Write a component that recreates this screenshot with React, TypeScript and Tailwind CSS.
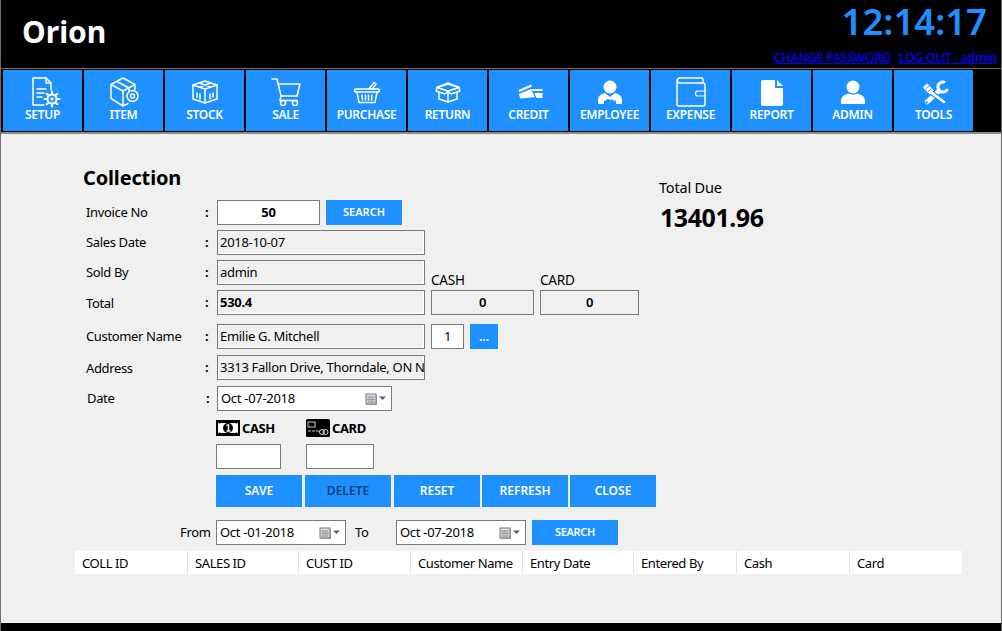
import React from 'react';

const FONT = "font-['Noto_Sans','Open_Sans',sans-serif]";

// All toolbar icons share a 40x34 box centred on the button
const Svg = ({ children }: { children: React.ReactNode }) => (
  <svg width="40" height="34" viewBox="0 0 40 34" fill="none" stroke="#fff" strokeWidth="1.5" strokeLinejoin="round" strokeLinecap="round">
    {children}
  </svg>
);

const SetupIcon = () => (
  <Svg>
    <path d="M21 29H10V2h13l5 5v7" />
    <path d="M23 2v5h5" />
    <path d="M14 13h9M14 17h7M14 21h5" />
    <circle cx="29" cy="23" r="4.5" strokeWidth="2" />
    <circle cx="29" cy="23" r="1.5" fill="#fff" stroke="none" />
    <path d="M29 15.5v2.5M29 28v2.5M21.5 23H24M34 23h2.500M23.7 17.700l1.800 1.800M32.500 26.500l1.800 1.800M34.300 17.700l-1.800 1.800M25.500 26.500l-1.800 1.800" strokeWidth="2" />
  </Svg>
);

const ItemIcon = () => (
  <Svg>
    <path d="M19 2L7 8.500v14L19 30l5-2.500M19 2l12 6.500v5M7 8.500L19 15l12-6.500M19 15v15" />
    <path d="M13 5.500l12 6.500v3.500" />
    <circle cx="28.500" cy="20" r="5.500" />
    <circle cx="28.500" cy="20" r="2" />
  </Svg>
);

const StockIcon = () => (
  <Svg>
    <path d="M20 5l12 4v14l-12 4-12-4V9z" />
    <path d="M8 9l12 4 12-4M20 13v14" />
    <path d="M14 7l12 4M26 7L14 11M12 17v4M15 18v5M25 18v5M28 17v4" />
  </Svg>
);

const SaleIcon = () => (
  <Svg>
    <path d="M6 3h5l4 17h16" />
    <path d="M12 8h22l-3 12" />
    <circle cx="17" cy="27" r="2.500" />
    <circle cx="29" cy="27" r="2.500" />
    <path d="M15 20l-1 4.500h17" />
  </Svg>
);

const PurchaseIcon = () => (
  <Svg>
    <path d="M9 13h22a1.500 1.500 0 010 3H9a1.500 1.500 0 010-3z" />
    <path d="M10 16l2 10.500h16l2-10.500" />
    <path d="M15 19l.5 5M18.500 19v5M21.500 19v5M25 19l-.5 5" />
    <path d="M22 13l5-6.500 2 1.500-3.500 5" />
  </Svg>
);

const ReturnIcon = () => (
  <Svg>
    <path d="M20 8l11 3.500L20 15 9 11.500z" />
    <path d="M9 11.500L20 7l11 4.500M9 12l-1 3 9 3 3-3 3 3 9-3-1-3" />
    <path d="M11 17v6l9 3 9-3v-6M20 15v11" />
  </Svg>
);

const CreditIcon = () => (
  <svg width="40" height="34" viewBox="0 0 40 34" fill="#fff">
    <path d="M9.500 14L22 8.500l1 2-12.500 5.500z" />
    <path d="M10 18l12-5 4 8-14 1.500-1-.5z" />
    <path d="M22.500 13h11v2h-10zM25.500 17h8v5h-6z" />
  </svg>
);

const EmployeeIcon = () => (
  <Svg>
    <circle cx="20" cy="11" r="6.500" fill="#fff" stroke="none" />
    <path d="M8 28v-4c0-4 3-6 7-7l5 4 5-4c4 1 7 3 7 7v4h-6v-3l-3-2-2 1-3-1-4 2v3z" fill="#fff" stroke="none" />
    <path d="M16 20l4 3 3-1 1 3" strokeWidth="1" />
  </Svg>
);

const ExpenseIcon = () => (
  <Svg>
    <path d="M32 7V4a2 2 0 00-2-2H9a3 3 0 00-3 3v23a2 2 0 002 2h24a2 2 0 002-2V9a2 2 0 00-2-2H9a3 3 0 01-3-3" />
    <path d="M34 15h-7a2.500 2.500 0 000 5h7" strokeWidth="1.200" />
  </Svg>
);

const ReportIcon = () => (
  <svg width="40" height="34" viewBox="0 0 40 34" fill="#fff">
    <path d="M11 4h12v8h8v16a2 2 0 01-2 2H11a2 2 0 01-2-2V6a2 2 0 012-2z" />
    <path d="M25 4l6 6h-6z" />
  </svg>
);

const AdminIcon = () => (
  <svg width="40" height="34" viewBox="0 0 40 34" fill="#fff">
    <circle cx="20" cy="11" r="6.500" />
    <path d="M8 28v-3c0-5 5-7 8-7.500 2 1.500 6 1.500 8 0 3 .5 8 2.500 8 7.500v3z" />
  </svg>
);

const ToolsIcon = () => (
  <svg width="40" height="34" viewBox="0 0 40 34" fill="none" stroke="#fff" strokeLinecap="round">
    {/* wrench */}
    <path d="M31 6.500A5 5 0 1 0 33.500 13" strokeWidth="3" strokeLinecap="butt" />
    <path d="M25 15L13 26" strokeWidth="4.500" />
    <circle cx="12.500" cy="26.500" r="1.200" fill="#1e90ff" stroke="none" />
    {/* screwdriver on top of the wrench, with a blue gap */}
    <path d="M18 17l12 9" stroke="#1e90ff" strokeWidth="5" strokeLinecap="butt" />
    <path d="M11 9.500l7 7" strokeWidth="6" strokeLinecap="butt" />
    <path d="M11.500 13.500l3.500-3.500M14 16l3.500-3.500" stroke="#1e90ff" strokeWidth="0.900" strokeLinecap="butt" />
    <path d="M18 17l12 9" strokeWidth="2.500" />
  </svg>
);

const NAV_ITEMS = [
  { label: 'SETUP', icon: <SetupIcon /> },
  { label: 'ITEM', icon: <ItemIcon /> },
  { label: 'STOCK', icon: <StockIcon /> },
  { label: 'SALE', icon: <SaleIcon /> },
  { label: 'PURCHASE', icon: <PurchaseIcon /> },
  { label: 'RETURN', icon: <ReturnIcon /> },
  { label: 'CREDIT', icon: <CreditIcon /> },
  { label: 'EMPLOYEE', icon: <EmployeeIcon /> },
  { label: 'EXPENSE', icon: <ExpenseIcon /> },
  { label: 'REPORT', icon: <ReportIcon /> },
  { label: 'ADMIN', icon: <AdminIcon /> },
  { label: 'TOOLS', icon: <ToolsIcon /> },
];

const COLUMNS = [
  { label: 'COLL ID', w: 'w-[113px]' },
  { label: 'SALES ID', w: 'w-[111px]' },
  { label: 'CUST ID', w: 'w-[112px]' },
  { label: 'Customer Name', w: 'w-[112px]' },
  { label: 'Entry Date', w: 'w-[111px]' },
  { label: 'Entered By', w: 'w-[103px]' },
  { label: 'Cash', w: 'w-[113px]' },
  { label: 'Card', w: 'flex-1' },
];

const Row = ({ label, children, className = '', labelClass = '' }: { label: string; children: React.ReactNode; className?: string; labelClass?: string }) => (
  <div className={`flex h-[25px] items-center ${className}`}>
    <div className={`w-[122px] pl-[3px] text-[13px] tracking-[-0.35px] text-black ${labelClass}`}>{label}</div>
    <div className="w-[12px] text-[13px] font-bold text-black">:</div>
    {children}
  </div>
);

const Field = ({ children, className = '' }: { children: React.ReactNode; className?: string }) => (
  <div className={`flex h-[25px] items-center overflow-hidden whitespace-nowrap border border-[#7a7a7a] text-[13px] tracking-[-0.3px] text-black ${className}`}>
    {children}
  </div>
);

const ReadOnly = ({ children, className = '' }: { children: React.ReactNode; className?: string }) => (
  <Field className={`w-[208px] bg-[#f0f0f0] pl-[2px] shadow-[inset_-1px_-1px_0_#fff] ${className}`}>{children}</Field>
);

const CalendarCaret = () => (
  <svg width="22" height="14" viewBox="0 0 22 14" className="shrink-0">
    <rect x="2" y="3" width="10" height="10" fill="#a8a8a8" />
    <rect x="1" y="2" width="10" height="10" fill="#e0e0e0" stroke="#787878" />
    <path d="M2 5h8M2 7.500h8M2 10h8M4 4v7M6 4v7M8 4v7" stroke="#9090a0" strokeWidth="0.800" />
    <path d="M14 4.500h7l-3.500 3.500z" fill="#55607a" />
  </svg>
);

const DateField = ({ value, className }: { value: string; className: string }) => (
  <Field className={`justify-between bg-white pl-[3px] pr-[4px] ${className}`}>
    <span className="pt-[1px]">{value}</span>
    <CalendarCaret />
  </Field>
);

const ActionButton = ({ children, className = '' }: { children: React.ReactNode; className?: string }) => (
  <button className={`flex items-center justify-center bg-[#1e90ff] font-semibold ${className}`}>
    {children}
  </button>
);

const CashIcon = () => (
  <svg width="24" height="18" viewBox="0 0 24 18" className="shrink-0">
    <path d="M0 1h24v16H0z" fill="#000" />
    <path d="M5 4h14a3 3 0 003 0v10a3 3 0 00-3 0H5a3 3 0 00-3 0V4a3 3 0 003 0z" fill="#fff" />
    <circle cx="12" cy="9" r="5" fill="#000" />
    <path d="M10.500 6.500L12.500 6v6M10.500 12h4" stroke="#fff" strokeWidth="1.500" fill="none" />
  </svg>
);

const CardIcon = () => (
  <svg width="24" height="18" viewBox="0 0 24 18" className="shrink-0">
    <rect x="0" y="0" width="24" height="18" rx="1.500" fill="#000" />
    <rect x="2" y="3" width="7" height="5" fill="none" stroke="#ccc" />
    <path d="M2 12h3M6 12h3M10 12h3" stroke="#ccc" />
    <circle cx="16" cy="13" r="2.500" fill="none" stroke="#ddd" />
    <circle cx="19.500" cy="13" r="2.500" fill="none" stroke="#ddd" />
  </svg>
);

export default function App() {
  return (
    <div className={`flex h-[631px] w-[1002px] flex-col overflow-hidden border-x border-[#6e6e6e] bg-black ${FONT}`}>
      {/* Header */}
      <header className="flex h-[68px] justify-between bg-black pl-[21px] pr-[4px]">
        <div className="pt-[10px] text-[30px] font-bold leading-[44px] text-white">Orion</div>
        <div className="flex flex-col items-end">
          <div className="-mt-[4px] mr-[10px] text-[36.500px] font-semibold leading-[50px] text-[#1e90ff]">12:14:17</div>
          <div className="mt-[3px] flex gap-[8px] text-[12.500px] font-medium leading-[17px] tracking-[-0.33px] text-[#0000ff] underline">
            <span>CHANGE PASSWORD</span>
            <span>LOG OUT - admin</span>
          </div>
        </div>
      </header>
      <div className="h-[1px] bg-[#6e6e6e]" />

      {/* Toolbar */}
      <nav className="flex h-[63px] gap-[2px] bg-black pl-[2px] pt-[1px]">
        {NAV_ITEMS.map((item) => (
          <div key={item.label} className="flex h-[61px] w-[79px] flex-col items-center bg-[#1e90ff] pt-[6px]">
            {item.icon}
            <div className="-mt-[2px] text-[12px] font-semibold leading-[14px] tracking-[-0.3px] text-white">{item.label}</div>
          </div>
        ))}
      </nav>
      <div className="h-[2px] bg-[#8a8a8a]" />

      {/* Content */}
      <main className="flex-1 bg-[#f0f0f0] pl-[74px] pt-[29px]">
        <div className="flex">
          <div className="w-[584px] pl-[8px]">
            <h1 className="mb-[7px] h-[30px] text-[20px] font-bold leading-[30px] tracking-[-0.15px] text-black">Collection</h1>

            <Row label="Invoice No">
              <Field className="w-[103px] justify-center bg-white font-bold">50</Field>
              <ActionButton className="ml-[6px] h-[25px] w-[76px] text-[11px] text-white">SEARCH</ActionButton>
            </Row>
            <Row label="Sales Date" className="mt-[5px]">
              <ReadOnly>2018-10-07</ReadOnly>
            </Row>
            <Row label="Sold By" className="mt-[5px]">
              <ReadOnly>admin</ReadOnly>
              <div className="ml-[6px] flex h-full items-end text-[13.500px] leading-[10px] tracking-[-0.2px] text-black">
                <span className="w-[109px]">CASH</span>
                <span>CARD</span>
              </div>
            </Row>
            <Row label="Total" className="mt-[5px]" labelClass="pt-[2px]">
              <ReadOnly className="font-bold">530.4</ReadOnly>
              <Field className="ml-[6px] w-[103px] justify-center bg-[#f0f0f0] font-semibold">0</Field>
              <Field className="ml-[6px] w-[99px] justify-center bg-[#f0f0f0] font-semibold">0</Field>
            </Row>
            <Row label="Customer Name" className="mt-[9px]">
              <ReadOnly>Emilie G. Mitchell</ReadOnly>
              <Field className="ml-[6px] w-[33px] justify-center bg-white">1</Field>
              <ActionButton className="ml-[6px] h-[25px] w-[28px] text-[12px] text-white">...</ActionButton>
            </Row>
            <Row label="Address" className="mt-[6px]" labelClass="pt-[2px]">
              <ReadOnly>3313 Fallon Drive, Thorndale, ON N0M 2P0</ReadOnly>
            </Row>
            <Row label="Date" className="mt-[6px]" labelClass="ml-[1px]">
              <DateField value="Oct -07-2018" className="-ml-[1px] w-[175px]" />
            </Row>

            <div className="ml-[133px] mt-[7px] flex h-[18px]">
              <div className="flex w-[90px] items-center gap-[2px] pt-[1px] text-[13px] font-bold leading-[18px] tracking-[-0.4px] text-black">
                <CashIcon />
                CASH
              </div>
              <div className="flex items-center gap-[2px] pt-[1px] text-[13px] font-bold leading-[18px] tracking-[-0.4px] text-black">
                <CardIcon />
                CARD
              </div>
            </div>
            <div className="ml-[133px] mt-[8px] flex">
              <div className="h-[25px] w-[65px] border border-[#7a7a7a] bg-white" />
              <div className="ml-[25px] h-[25px] w-[68px] border border-[#7a7a7a] bg-white" />
            </div>
            <div className="ml-[133px] mt-[6px] flex">
              <ActionButton className="h-[32px] w-[86px] text-[12px] text-white">SAVE</ActionButton>
              <ActionButton className="ml-[3px] h-[32px] w-[86px] text-[12px] text-[#0f3f78]">DELETE</ActionButton>
              <ActionButton className="ml-[3px] h-[32px] w-[86px] text-[12px] text-white">RESET</ActionButton>
              <ActionButton className="ml-[2px] h-[32px] w-[86px] text-[12px] text-white">REFRESH</ActionButton>
              <ActionButton className="ml-[2px] h-[32px] w-[86px] text-[12px] text-white">CLOSE</ActionButton>
            </div>
          </div>

          {/* Total due */}
          <div className="pt-[14px]">
            <div className="text-[14.500px] leading-[20px] tracking-[-0.2px] text-black">Total Due</div>
            <div className="mt-[4px] pl-[1px] text-[25px] font-bold leading-[32px] tracking-[-0.45px] text-black">13401.96</div>
          </div>
        </div>

        {/* Date range filter */}
        <div className="ml-[105px] mt-[13px] flex h-[25px] items-center text-[13px] tracking-[-0.3px] text-black">
          <span className="w-[36px] pt-[1px]">From</span>
          <DateField value="Oct -01-2018" className="w-[130px]" />
          <span className="ml-[9px] w-[41px] pt-[1px]">To</span>
          <DateField value="Oct -07-2018" className="w-[130px]" />
          <ActionButton className="ml-[6px] h-[25px] w-[86px] text-[11px] text-white">SEARCH</ActionButton>
        </div>

        {/* Grid header */}
        <div className="mt-[6px] flex h-[23px] w-[887px] bg-white">
          {COLUMNS.map((col) => (
            <div key={col.label} className={`${col.w} border-r border-[#e4e4e4] pl-[7px] pt-[1px] text-[13px] leading-[23px] tracking-[-0.4px] text-black last:border-r-0`}>
              {col.label}
            </div>
          ))}
        </div>
      </main>
      <div className="h-[8px] shrink-0 bg-black" />
    </div>
  );
}
